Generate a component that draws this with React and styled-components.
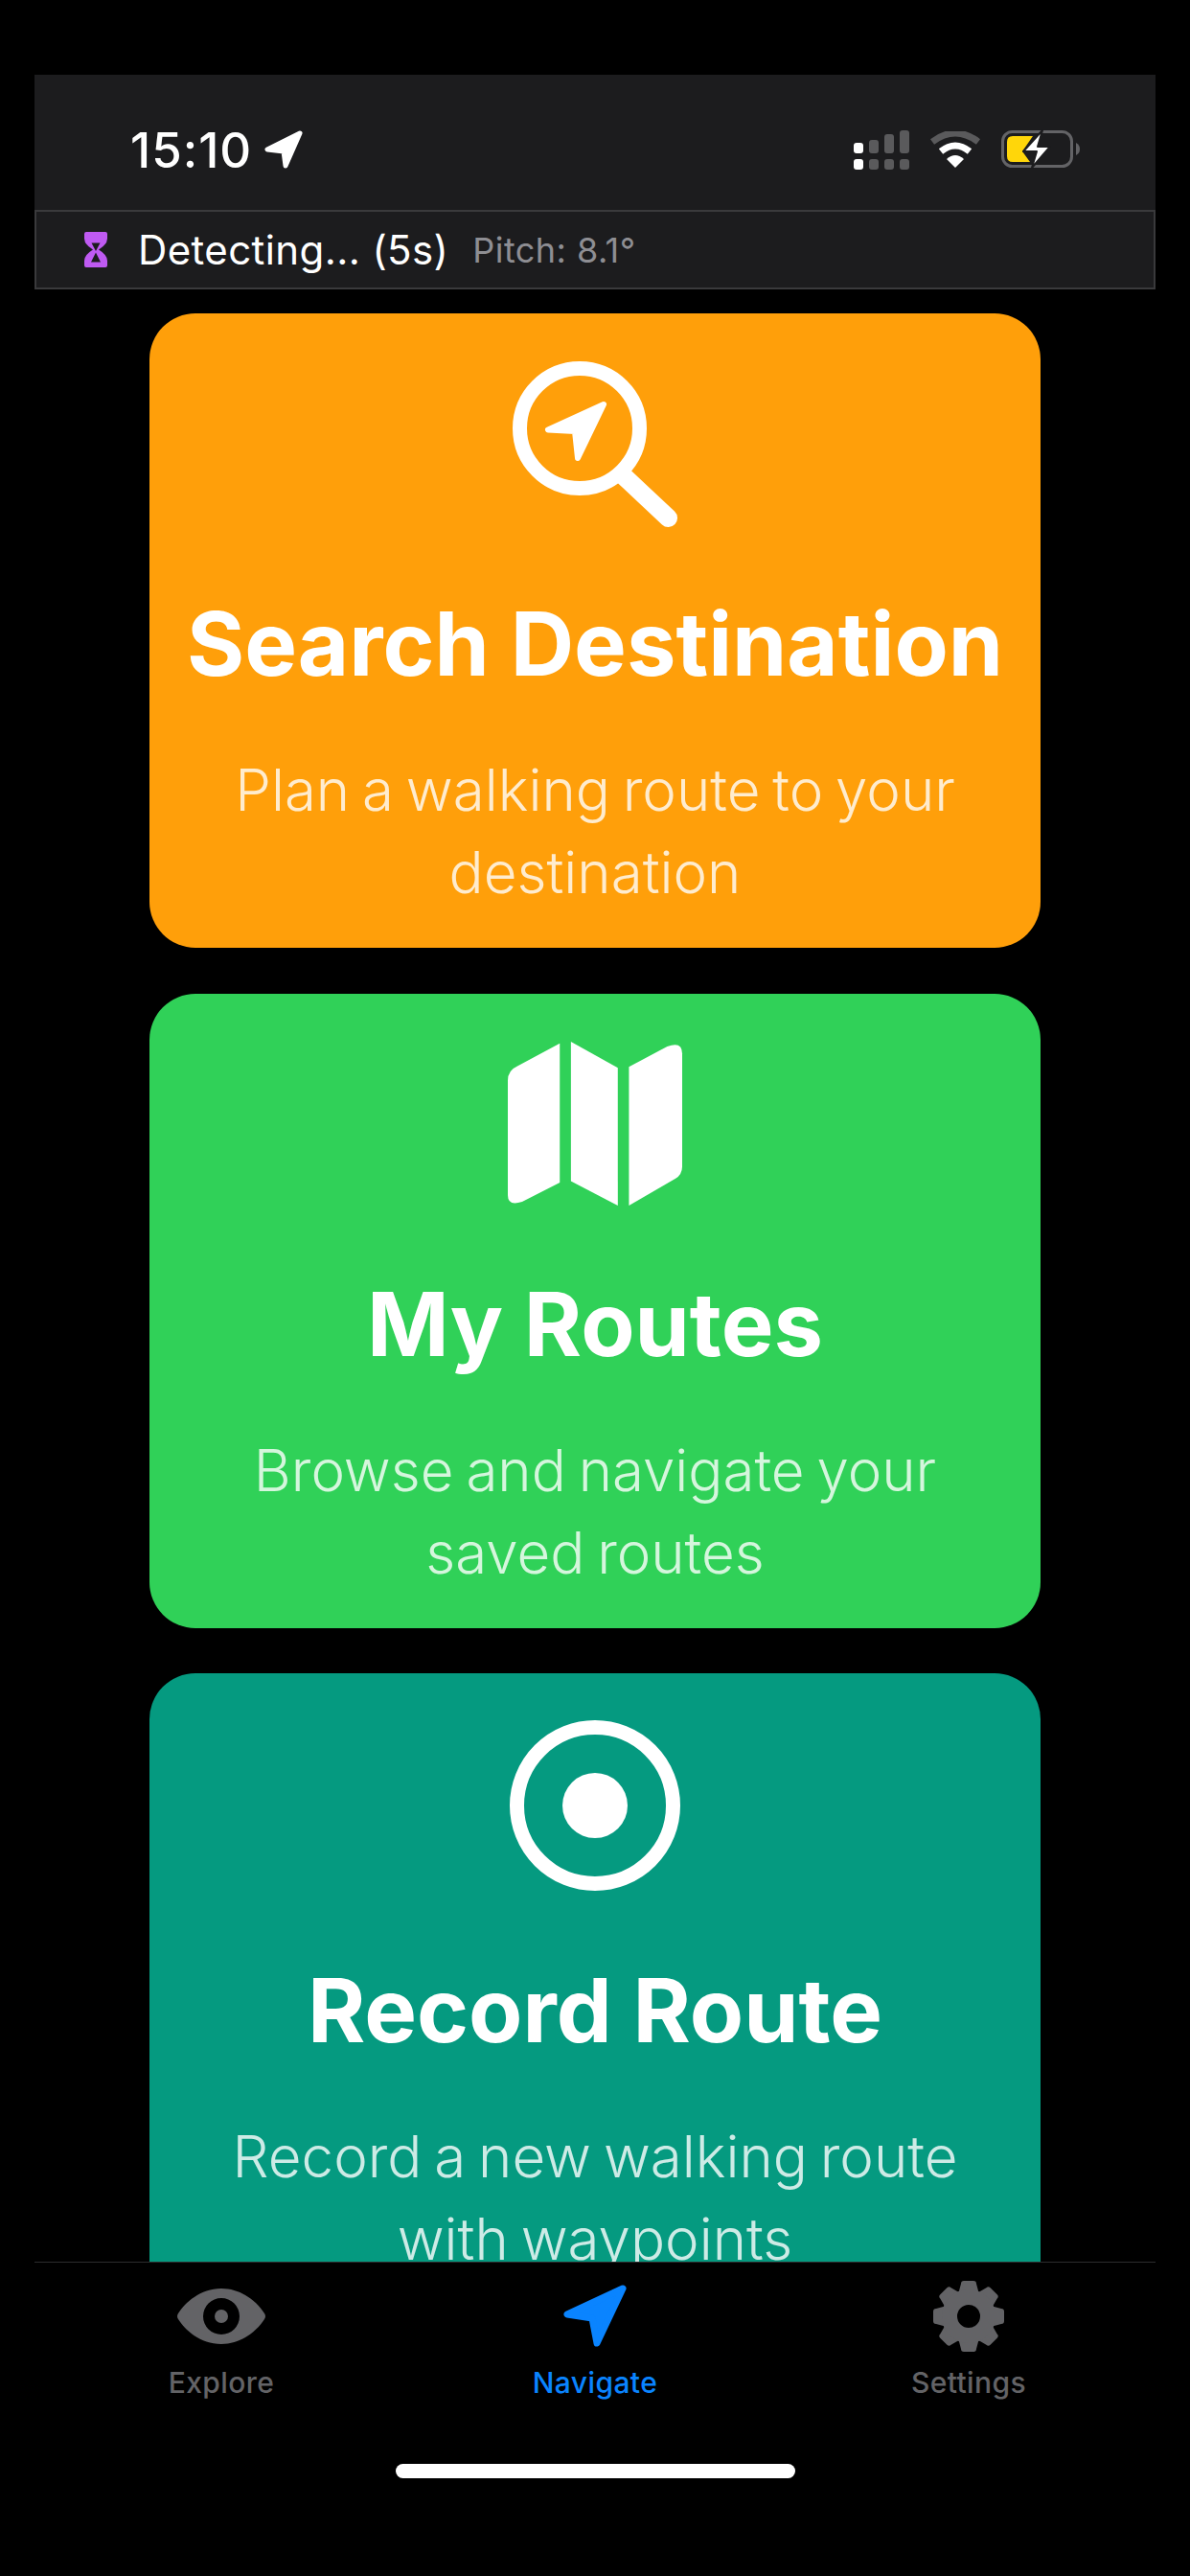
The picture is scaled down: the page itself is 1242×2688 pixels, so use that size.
import React from "react";
import styled, { createGlobalStyle } from "styled-components";

const Global = createGlobalStyle`
  html, body { margin: 0; padding: 0; background: #000; }
  * { box-sizing: border-box; }
  body { font-family: Inter, "Liberation Sans", sans-serif; }
`;

const Screen = styled.div`
  width: 1242px;
  height: 2688px;
  background: #000;
  display: flex;
  flex-direction: column;
  padding: 78px 36px 0;
  overflow: hidden;
`;

const Header = styled.div`
  height: 141px;
  background: #1c1c1e;
  display: flex;
  align-items: center;
  justify-content: space-between;
  padding: 15px 79px 0 100px;
  flex: none;
`;

const Time = styled.div`
  display: flex;
  align-items: center;
  gap: 12px;
  color: #fff;
  font-size: 51px;
  font-weight: 500;
  letter-spacing: 1px;
`;

const StatusIcons = styled.div`
  display: flex;
  align-items: center;
  gap: 22px;
`;

const DetectBar = styled.div`
  height: 83px;
  background: #1c1c1e;
  border: 2px solid #3a3a3c;
  display: flex;
  align-items: center;
  padding-left: 50px;
  flex: none;
`;

const DetectText = styled.span`
  color: #fff;
  font-size: 42px;
  letter-spacing: 0.4px;
  margin-left: 32px;
`;

const PitchText = styled.span`
  color: #8e8e93;
  font-size: 36px;
  letter-spacing: 0.45px;
  margin-left: 25px;
`;

const Content = styled.div`
  flex: 1;
  min-height: 0;
  overflow: hidden;
  padding: 25px 120px 0;
  display: flex;
  flex-direction: column;
  gap: 47.5px;
`;

const Card = styled.div`
  background: ${p => p.$bg};
  border-radius: 48px;
  padding: 48px 30px 36px;
  display: flex;
  flex-direction: column;
  align-items: center;
  flex: none;
`;

const IconBox = styled.div`
  height: 180px;
  display: flex;
  align-items: center;
  justify-content: center;
  margin-top: ${p => p.$nudge || 0}px;
  margin-bottom: ${p => -(p.$nudge || 0)}px;
`;

const CardTitle = styled.div`
  color: #fff;
  font-size: 92px;
  line-height: 108px;
  font-weight: 700;
  margin-top: ${p => p.$gap}px;
  white-space: nowrap;
`;

const CardDesc = styled.div`
  color: rgba(255, 255, 255, 0.8);
  font-size: 60px;
  line-height: 86px;
  font-weight: 300;
  word-spacing: -4px;
  text-align: center;
  margin-top: 55px;
  max-width: 800px;
`;

const TabBar = styled.div`
  height: 328px;
  flex: none;
  border-top: 1px solid #2c2c2e;
  display: grid;
  grid-template-columns: repeat(3, 1fr);
  align-content: start;
  position: relative;
`;

const Tab = styled.div`
  display: flex;
  flex-direction: column;
  align-items: center;
  color: ${p => (p.$active ? "#0a84ff" : "#636366")};
`;

const TabIcon = styled.div`
  height: 78px;
  margin-top: 17px;
  display: flex;
  align-items: center;
  justify-content: center;
`;

const TabLabel = styled.div`
  font-size: 30px;
  font-weight: 500;
  letter-spacing: 0.4px;
  line-height: 36px;
  margin-top: 12px;
`;

const HomeBar = styled.div`
  position: absolute;
  left: 377px;
  top: 210px;
  width: 417px;
  height: 15px;
  border-radius: 8px;
  background: #fff;
`;

function LocationArrow() {
  return (
    <svg width="42" height="40" viewBox="0 0 42 40">
      <path d="M38 3 L4 20 L21 22 L23 37 Z" fill="#fff" stroke="#fff" strokeWidth="5" strokeLinejoin="round" />
    </svg>
  );
}

function SignalIcon() {
  return (
    <svg width="58" height="41" viewBox="0 0 58 41">
      <g fill="#5a5a5c">
        <rect x="16" y="10" width="10" height="14" rx="3" />
        <rect x="32" y="4" width="10" height="20" rx="3" />
        <rect x="48" y="0" width="10" height="24" rx="3" />
        <rect x="16" y="30" width="10" height="11" rx="3" />
        <rect x="32" y="30" width="10" height="11" rx="3" />
        <rect x="48" y="30" width="10" height="11" rx="3" />
      </g>
      <g fill="#fff">
        <rect x="0" y="13" width="10" height="11" rx="3" />
        <rect x="0" y="30" width="10" height="11" rx="3" />
      </g>
    </svg>
  );
}

function WifiIcon() {
  return (
    <svg width="52" height="38" viewBox="0 0 52 38">
      <path d="M2 11 Q26 -7 50 11" fill="none" stroke="#5a5a5c" strokeWidth="7" />
      <path d="M11 21 Q26 9 41 21" fill="none" stroke="#fff" strokeWidth="7" />
      <path d="M17 29 Q26 21 35 29 L26 38 Z" fill="#fff" />
    </svg>
  );
}

function BatteryIcon() {
  return (
    <svg width="82" height="42" viewBox="0 0 82 42">
      <rect x="1.5" y="2.5" width="72" height="36" rx="10" fill="none" stroke="#636366" strokeWidth="3" />
      <path d="M78 14 Q82 16 82 20.5 Q82 25 78 27 Z" fill="#636366" />
      <path d="M6 13 Q6 7 12 7 L33 7 L22 23 L30 34 L12 34 Q6 34 6 28 Z" fill="#ffd60a" />
      <path d="M43 1 L23 23 L37 23 L32 40 L51 18 L38 18 Z" fill="#fff" stroke="#1c1c1e" strokeWidth="2" strokeLinejoin="round" />
    </svg>
  );
}

function HourglassIcon() {
  return (
    <svg width="24" height="37" viewBox="0 0 24 37">
      <path d="M0 2 Q0 0 2 0 H22 Q24 0 24 2 V7 Q24 13 15 18.5 Q24 24 24 30 V35 Q24 37 22 37 H2 Q0 37 0 35 V30 Q0 24 9 18.5 Q0 13 0 7 Z" fill="#bf5af2" />
      <path d="M7.5 11.5 H16.5 L12 20 Z M12 21.5 L17 31.5 H7 Z" fill="#1c1c1e" />
    </svg>
  );
}

function SearchArrowIcon() {
  return (
    <svg width="172" height="173" viewBox="0 0 172 173">
      <circle cx="70" cy="70" r="62.5" fill="none" stroke="#fff" strokeWidth="15" />
      <path d="M114 118 L162.5 163.5" stroke="#fff" strokeWidth="19" strokeLinecap="round" />
      <path d="M95 45 L37 71.5 L65 73 L68 101 Z" fill="#fff" stroke="#fff" strokeWidth="6" strokeLinejoin="round" />
    </svg>
  );
}

function MapIcon() {
  return (
    <svg width="183" height="173" viewBox="150 105 550 520">
      <g fill="#fff">
        <path d="M313 113 V550 L195 610 Q150 625 150 590 V230 Q150 198 180 185 Z" />
        <path d="M348 108 L495 190 V622 L348 545 Z" />
        <path d="M530 187 L650 123 Q697 105 697 145 V500 Q697 525 675 538 L530 622 Z" />
      </g>
    </svg>
  );
}

function RecordIcon() {
  return (
    <svg width="178" height="178" viewBox="0 0 178 178">
      <circle cx="89" cy="89" r="81.5" fill="none" stroke="#fff" strokeWidth="15" />
      <circle cx="89" cy="89" r="34" fill="#fff" />
    </svg>
  );
}

function EyeIcon() {
  return (
    <svg width="92" height="58" viewBox="0 0 92 58">
      <path fillRule="evenodd" fill="currentColor" d="M46 0 C68 0 84 15 91 26 Q93 29 91 32 C84 43 68 58 46 58 C24 58 8 43 1 32 Q-1 29 1 26 C8 15 24 0 46 0 Z M46 10 A19 19 0 1 0 46 48 A19 19 0 1 0 46 10 Z" />
      <circle cx="46" cy="29" r="7" fill="currentColor" />
    </svg>
  );
}

function NavArrowIcon() {
  return (
    <svg width="66" height="66" viewBox="0 0 66 66">
      <path d="M62 4 L4 31 L30 35 L35 61 Z" fill="currentColor" stroke="currentColor" strokeWidth="7" strokeLinejoin="round" />
    </svg>
  );
}

function GearIcon() {
  const teeth = [0, 45, 90, 135, 180, 225, 270, 315];
  return (
    <svg width="74" height="74" viewBox="0 0 74 74">
      <g fill="currentColor">
        {teeth.map(a => (
          <path key={a} d="M29 3 Q29 0 32 0 H42 Q45 0 45 3 L49 18 H25 Z" transform={`rotate(${a} 37 37)`} />
        ))}
      </g>
      <circle cx="37" cy="37" r="20" fill="none" stroke="currentColor" strokeWidth="16" />
    </svg>
  );
}

const cards = [
  { bg: "#ff9f0a", icon: <SearchArrowIcon />, nudge: -2, title: "Search Destination", desc: "Plan a walking route to your destination", gap: 63 },
  { bg: "#30d158", icon: <MapIcon />, nudge: -2, title: "My Routes", desc: "Browse and navigate your saved routes", gap: 63 },
  { bg: "#059a80", icon: <RecordIcon />, title: "Record Route", desc: "Record a new walking route with waypoints", gap: 70 },
];

const tabs = [
  { label: "Explore", icon: <EyeIcon /> },
  { label: "Navigate", icon: <NavArrowIcon />, active: true },
  { label: "Settings", icon: <GearIcon /> },
];

export default function App() {
  return (
    <Screen>
      <Global />
      <Header>
        <Time>
          15:10
          <LocationArrow />
        </Time>
        <StatusIcons>
          <SignalIcon />
          <WifiIcon />
          <BatteryIcon />
        </StatusIcons>
      </Header>
      <DetectBar>
        <HourglassIcon />
        <DetectText>Detecting... (5s)</DetectText>
        <PitchText>Pitch: 8.1°</PitchText>
      </DetectBar>
      <Content>
        {cards.map(c => (
          <Card key={c.title} $bg={c.bg}>
            <IconBox $nudge={c.nudge}>{c.icon}</IconBox>
            <CardTitle $gap={c.gap}>{c.title}</CardTitle>
            <CardDesc>{c.desc}</CardDesc>
          </Card>
        ))}
      </Content>
      <TabBar>
        {tabs.map(t => (
          <Tab key={t.label} $active={t.active}>
            <TabIcon>{t.icon}</TabIcon>
            <TabLabel>{t.label}</TabLabel>
          </Tab>
        ))}
        <HomeBar />
      </TabBar>
    </Screen>
  );
}
